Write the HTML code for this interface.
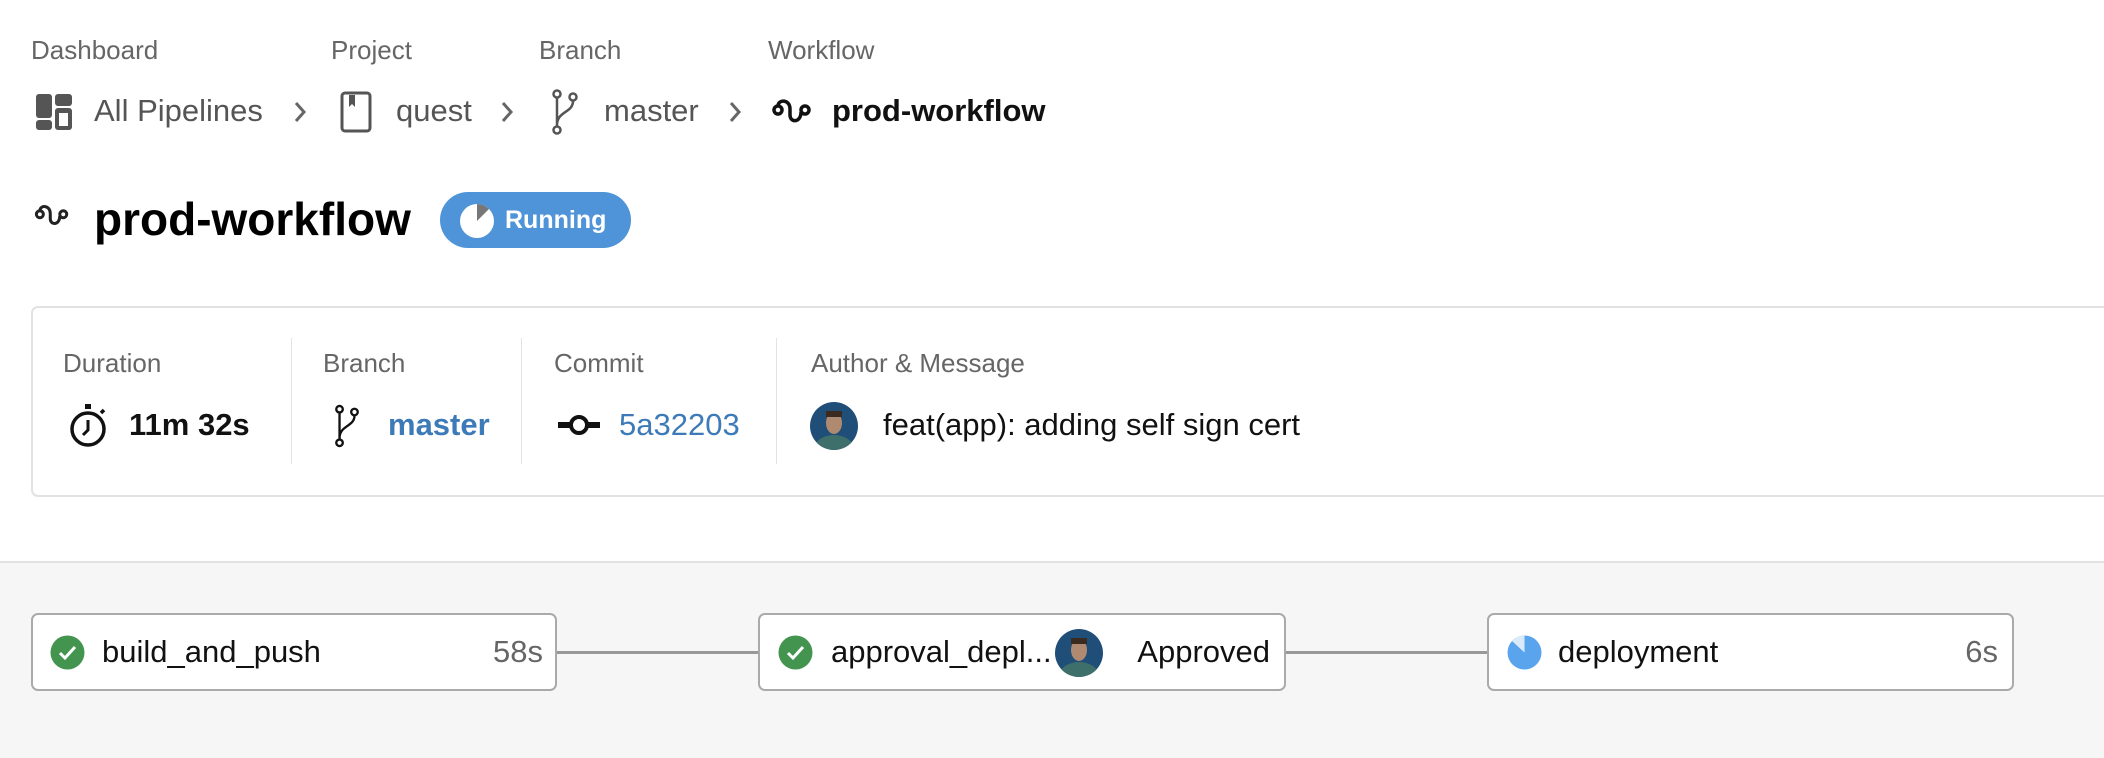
<!DOCTYPE html>
<html><head><meta charset="utf-8"><style>
*{margin:0;padding:0;box-sizing:border-box}
body{width:2104px;height:758px;background:#fff;font-family:"Liberation Sans",Arial,sans-serif;position:relative;overflow:hidden;color:#111}
.a{position:absolute;white-space:nowrap}
.lbl{font-size:26px;color:#666;line-height:30px}
.bc{font-size:31px;color:#555;line-height:34px}
.sep{position:absolute;width:1px;background:#e3e3e3;top:338px;height:126px}
.node{position:absolute;top:613px;height:78px;background:#fff;border:2px solid #aaa;border-radius:7px}
.line{position:absolute;top:651px;height:3px;background:#999}
.nt{position:absolute;top:20px;font-size:31px;line-height:34px;color:#111;white-space:nowrap}
</style></head><body>
<div class="a lbl" style="left:31px;top:35px">Dashboard</div>
<div class="a lbl" style="left:331px;top:35px">Project</div>
<div class="a lbl" style="left:539px;top:35px">Branch</div>
<div class="a lbl" style="left:768px;top:35px">Workflow</div>

<svg class="a" style="left:36px;top:94px" width="36" height="36" viewBox="0 0 36 36"><rect x="0" y="0" width="16" height="24" rx="3" fill="#555"/><rect x="19" y="0" width="17" height="12" rx="3" fill="#555"/><rect x="0" y="26" width="16" height="10" rx="3" fill="#555"/><rect x="19" y="14" width="17" height="22" rx="3" fill="#555"/><rect x="23" y="19" width="9" height="13" fill="#fff"/></svg>
<div class="a bc" style="left:94px;top:94px">All Pipelines</div>
<svg class="a" style="left:292px;top:100px" width="16" height="24"><path d="M4 3l8 9-8 9" stroke="#666" stroke-width="3" fill="none"/></svg>
<svg class="a" style="left:340px;top:91px" width="32" height="42"><rect x="2" y="2" width="28" height="38" rx="3" stroke="#555" stroke-width="3" fill="none"/><path d="M9 4v12l3-3 3 3V4z" fill="#555"/></svg>
<div class="a bc" style="left:396px;top:94px">quest</div>
<svg class="a" style="left:499px;top:100px" width="16" height="24"><path d="M4 3l8 9-8 9" stroke="#666" stroke-width="3" fill="none"/></svg>
<svg class="a" style="left:550px;top:89px" width="30" height="46" viewBox="0 0 30 46"><circle cx="7" cy="5" r="3.5" stroke="#555" stroke-width="2.5" fill="none"/><circle cx="7" cy="41" r="3.5" stroke="#555" stroke-width="2.5" fill="none"/><circle cx="23" cy="8" r="3.5" stroke="#555" stroke-width="2.5" fill="none"/><path d="M7 9v28M23 12c0 12-16 10-16 24" stroke="#555" stroke-width="2.5" fill="none"/></svg>
<div class="a bc" style="left:604px;top:94px">master</div>
<svg class="a" style="left:727px;top:100px" width="16" height="24"><path d="M4 3l8 9-8 9" stroke="#666" stroke-width="3" fill="none"/></svg>
<svg class="a" style="left:772px;top:97px" width="40" height="30" viewBox="0 0 40 30"><circle cx="6" cy="13" r="4" stroke="#111" stroke-width="3.5" fill="none"/><circle cx="33" cy="13" r="4" stroke="#111" stroke-width="3.5" fill="none"/><path d="M6 9c0-7 12-7 12 3v6c0 8 11 8 11-3" stroke="#111" stroke-width="3.5" fill="none"/></svg>
<div class="a bc" style="left:832px;top:94px;color:#111;font-weight:bold">prod-workflow</div>

<svg class="a" style="left:34px;top:203px" width="36" height="26" viewBox="0 0 40 30"><circle cx="6" cy="13" r="4" stroke="#222" stroke-width="3.5" fill="none"/><circle cx="33" cy="13" r="4" stroke="#222" stroke-width="3.5" fill="none"/><path d="M6 9c0-7 12-7 12 3v6c0 8 11 8 11-3" stroke="#222" stroke-width="3.5" fill="none"/></svg>
<div class="a" style="left:94px;top:193px;font-size:46px;font-weight:bold;line-height:52px;color:#000">prod-workflow</div>
<div class="a" style="left:440px;top:192px;width:191px;height:56px;border-radius:28px;background:#4f94d8"></div>
<svg class="a" style="left:459px;top:203px" width="36" height="36"><circle cx="18" cy="18" r="17" fill="#fff"/><path d="M18 18V1A17 17 0 0 1 30 6z" fill="#777"/></svg>
<div class="a" style="left:505px;top:205px;font-size:25px;font-weight:bold;color:#fff;line-height:30px">Running</div>

<div class="a" style="left:31px;top:306px;width:2100px;height:191px;border:2px solid #e2e2e2;border-radius:7px"></div>
<div class="sep" style="left:291px"></div><div class="sep" style="left:521px"></div><div class="sep" style="left:776px"></div>
<div class="a lbl" style="left:63px;top:348px">Duration</div>
<div class="a lbl" style="left:323px;top:348px">Branch</div>
<div class="a lbl" style="left:554px;top:348px">Commit</div>
<div class="a lbl" style="left:811px;top:348px">Author &amp; Message</div>
<svg class="a" style="left:68px;top:403px" width="40" height="46" viewBox="0 0 40 46"><rect x="17" y="1" width="6" height="5" fill="#111"/><circle cx="20" cy="26" r="16" stroke="#111" stroke-width="3.5" fill="none"/><path d="M20 17v10l-5 5" stroke="#111" stroke-width="3" fill="none"/><path d="M33 10l3 -3" stroke="#111" stroke-width="3.5"/></svg>
<div class="a" style="left:129px;top:408px;font-size:31px;line-height:34px;font-weight:bold;color:#111">11m 32s</div>
<svg class="a" style="left:333px;top:403px" width="28" height="46" viewBox="0 0 30 46"><circle cx="7" cy="5" r="3.5" stroke="#111" stroke-width="2.5" fill="none"/><circle cx="7" cy="41" r="3.5" stroke="#111" stroke-width="2.5" fill="none"/><circle cx="23" cy="8" r="3.5" stroke="#111" stroke-width="2.5" fill="none"/><path d="M7 9v28M23 12c0 12-16 10-16 24" stroke="#111" stroke-width="2.5" fill="none"/></svg>
<div class="a" style="left:388px;top:408px;font-size:31px;line-height:34px;font-weight:bold;color:#3d7ab8">master</div>
<svg class="a" style="left:558px;top:413px" width="42" height="24"><rect x="0" y="9" width="42" height="6" fill="#111"/><circle cx="21" cy="12" r="8" stroke="#111" stroke-width="4" fill="#fff"/></svg>
<div class="a" style="left:619px;top:408px;font-size:31px;line-height:34px;color:#3d7ab8">5a32203</div>
<svg class="a" style="left:809px;top:401px" width="50" height="50"><defs><clipPath id="c"><circle cx="25" cy="25" r="24"/></clipPath></defs><g clip-path="url(#c)"><rect width="50" height="50" fill="#1f4e79"/><ellipse cx="25" cy="48" rx="20" ry="14" fill="#3f6f6a"/><ellipse cx="25" cy="22" rx="8" ry="11" fill="#b08a70"/><rect x="17" y="10" width="16" height="6" fill="#3a2a20"/></g></svg>
<div class="a" style="left:883px;top:408px;font-size:31px;line-height:34px;color:#111">feat(app): adding self sign cert</div>

<div class="a" style="left:0;top:561px;width:2104px;height:197px;background:#f6f6f6;border-top:2px solid #e2e2e2"></div>
<div class="line" style="left:556px;width:204px"></div>
<div class="line" style="left:1285px;width:204px"></div>
<div class="node" style="left:31px;width:526px">
<svg style="position:absolute;left:17px;top:20px" width="35" height="35"><circle cx="17.5" cy="17.5" r="17" fill="#43944f"/><path d="M10 18l5 5 10-11" stroke="#fff" stroke-width="3" fill="none"/></svg>
<div class="nt" style="left:69px">build_and_push</div>
<div class="nt" style="right:12px;color:#666">58s</div></div>
<div class="node" style="left:758px;width:528px">
<svg style="position:absolute;left:18px;top:20px" width="35" height="35"><circle cx="17.5" cy="17.5" r="17" fill="#43944f"/><path d="M10 18l5 5 10-11" stroke="#fff" stroke-width="3" fill="none"/></svg>
<div class="nt" style="left:71px">approval_depl...</div>
<svg style="position:absolute;left:294px;top:13px" width="50" height="50"><defs><clipPath id="c2"><circle cx="25" cy="25" r="24"/></clipPath></defs><g clip-path="url(#c2)"><rect width="50" height="50" fill="#1f4e79"/><ellipse cx="25" cy="48" rx="20" ry="14" fill="#3f6f6a"/><ellipse cx="25" cy="22" rx="8" ry="11" fill="#b08a70"/><rect x="17" y="10" width="16" height="6" fill="#3a2a20"/></g></svg>
<div class="nt" style="right:14px">Approved</div></div>
<div class="node" style="left:1487px;width:527px">
<svg style="position:absolute;left:18px;top:20px" width="35" height="35"><circle cx="17.5" cy="17.5" r="17" fill="#5aa4ee"/><path d="M17.5 17.5V0.5A17 17 0 0 0 5 6z" fill="#dbeafb"/></svg>
<div class="nt" style="left:69px">deployment</div>
<div class="nt" style="right:14px;color:#666">6s</div></div>
</body></html>
